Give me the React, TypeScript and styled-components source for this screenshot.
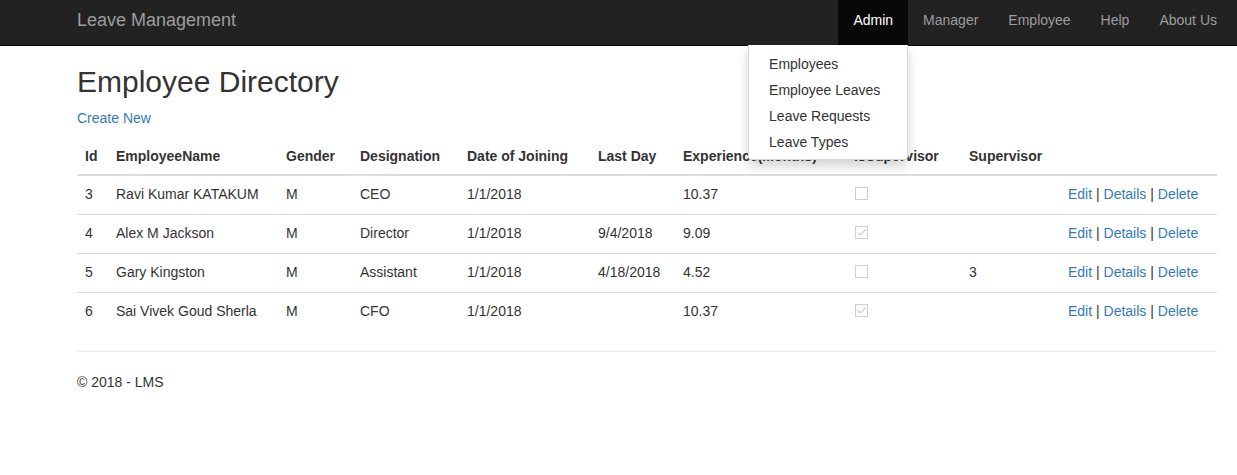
import React from "react";
import styled, { createGlobalStyle } from "styled-components";

const GlobalStyle = createGlobalStyle`
  * { box-sizing: border-box; }
  body {
    margin: 0;
    font-family: "Liberation Sans", Arial, sans-serif;
    font-size: 14px;
    line-height: 20px;
    color: #333;
    background: #fff;
  }
`;

const NavBar = styled.nav`
  background-color: #222;
  border-bottom: 1px solid #080808;
  height: 46px;
`;

const NavInner = styled.div`
  width: 1140px;
  margin-left: 77px;
  height: 45px;
  display: flex;
  justify-content: space-between;
`;

const Brand = styled.a`
  font-size: 18px;
  line-height: 20px;
  padding-top: 10px;
  color: #9d9d9d;
  text-decoration: none;
`;

const NavList = styled.ul`
  list-style: none;
  margin: 0 -15px 0 0;
  padding: 0;
  display: flex;
`;

const NavItem = styled.li`
  position: relative;
`;

const NavLink = styled.a<{ $open?: boolean }>`
  display: block;
  height: 45px;
  padding: 10px 15px 0;
  color: ${(p) => (p.$open ? "#fff" : "#9d9d9d")};
  background-color: ${(p) => (p.$open ? "#080808" : "transparent")};
  text-decoration: none;
`;

const Dropdown = styled.ul`
  position: absolute;
  top: 45px;
  right: 0;
  z-index: 10;
  min-width: 160px;
  margin: 0;
  padding: 6px 0 4px;
  list-style: none;
  background: #fff;
  border: 1px solid rgba(0, 0, 0, 0.15);
  border-top: 0;
  border-radius: 0 0 4px 4px;
  box-shadow: 0 6px 12px rgba(0, 0, 0, 0.175);
`;

const DropdownLink = styled.a`
  display: block;
  padding: 3px 20px;
  color: #333;
  white-space: nowrap;
  text-decoration: none;
`;

const Container = styled.div`
  width: 1140px;
  margin-left: 77px;
`;

const Title = styled.h2`
  font-size: 30px;
  font-weight: 500;
  line-height: 33px;
  margin: 19px 0 10px;
`;

const Paragraph = styled.p`
  margin: 0 0 10px;
`;

const Link = styled.a`
  color: #337ab7;
  text-decoration: none;
`;

const Table = styled.table`
  width: 100%;
  table-layout: fixed;
  border-collapse: collapse;
  margin-bottom: 20px;
`;

const Th = styled.th`
  text-align: left;
  font-weight: bold;
  padding: 8px;
  vertical-align: bottom;
  border-bottom: 2px solid #ddd;
  white-space: nowrap;
`;

const Td = styled.td`
  padding: 8px 8px 10px;
  vertical-align: top;
  border-top: 1px solid #ddd;
  white-space: nowrap;
`;

const Box = styled.span`
  display: inline-block;
  width: 13px;
  height: 13px;
  margin: 3px 0 0 1px;
  border: 1px solid #cfcfcf;
  vertical-align: top;
  background: #fff;
`;

const Rule = styled.hr`
  border: 0;
  border-top: 1px solid #eee;
  margin: 20px 0;
`;

const CheckBox: React.FC<{ checked: boolean }> = ({ checked }) => (
  <Box>
    {checked && (
      <svg width="11" height="11" viewBox="0 0 11 11" style={{ display: "block" }}>
        <path d="M2 5.5 L4.5 8 L9.5 2.5" fill="none" stroke="#b5b5b5" strokeWidth="1" />
      </svg>
    )}
  </Box>
);

const employees = [
  { id: 3, name: "Ravi Kumar KATAKUM", gender: "M", role: "CEO", joined: "1/1/2018", last: "", exp: "10.37", sup: false, supervisor: "" },
  { id: 4, name: "Alex M Jackson", gender: "M", role: "Director", joined: "1/1/2018", last: "9/4/2018", exp: "9.09", sup: true, supervisor: "" },
  { id: 5, name: "Gary Kingston", gender: "M", role: "Assistant", joined: "1/1/2018", last: "4/18/2018", exp: "4.52", sup: false, supervisor: "3" },
  { id: 6, name: "Sai Vivek Goud Sherla", gender: "M", role: "CFO", joined: "1/1/2018", last: "", exp: "10.37", sup: true, supervisor: "" },
];

const widths = [31, 170, 74, 107, 131, 85, 171, 115, 99, 157];

const App: React.FC = () => {
  return (
    <>
      <GlobalStyle />
      <NavBar>
        <NavInner>
          <Brand href="#">Leave Management</Brand>
          <NavList>
            <NavItem>
              <NavLink href="#" $open>Admin</NavLink>
              <Dropdown>
                <li><DropdownLink href="#">Employees</DropdownLink></li>
                <li><DropdownLink href="#">Employee Leaves</DropdownLink></li>
                <li><DropdownLink href="#">Leave Requests</DropdownLink></li>
                <li><DropdownLink href="#">Leave Types</DropdownLink></li>
              </Dropdown>
            </NavItem>
            <NavItem><NavLink href="#">Manager</NavLink></NavItem>
            <NavItem><NavLink href="#">Employee</NavLink></NavItem>
            <NavItem><NavLink href="#">Help</NavLink></NavItem>
            <NavItem><NavLink href="#">About Us</NavLink></NavItem>
          </NavList>
        </NavInner>
      </NavBar>

      <Container>
        <Title>Employee Directory</Title>
        <Paragraph>
          <Link href="#">Create New</Link>
        </Paragraph>
        <Table>
          <colgroup>
            {widths.map((w, i) => (
              <col key={i} style={{ width: w }} />
            ))}
          </colgroup>
          <thead>
            <tr>
              <Th>Id</Th>
              <Th>EmployeeName</Th>
              <Th>Gender</Th>
              <Th>Designation</Th>
              <Th>Date of Joining</Th>
              <Th>Last Day</Th>
              <Th>Experience(Months)</Th>
              <Th>IsSupervisor</Th>
              <Th>Supervisor</Th>
              <Th></Th>
            </tr>
          </thead>
          <tbody>
            {employees.map((e) => (
              <tr key={e.id}>
                <Td>{e.id}</Td>
                <Td>{e.name}</Td>
                <Td>{e.gender}</Td>
                <Td>{e.role}</Td>
                <Td>{e.joined}</Td>
                <Td>{e.last}</Td>
                <Td>{e.exp}</Td>
                <Td><CheckBox checked={e.sup} /></Td>
                <Td>{e.supervisor}</Td>
                <Td>
                  <Link href="#">Edit</Link> | <Link href="#">Details</Link> |{" "}
                  <Link href="#">Delete</Link>
                </Td>
              </tr>
            ))}
          </tbody>
        </Table>
        <Rule />
        <footer>
          <Paragraph>© 2018 - LMS</Paragraph>
        </footer>
      </Container>
    </>
  );
};

export default App;
